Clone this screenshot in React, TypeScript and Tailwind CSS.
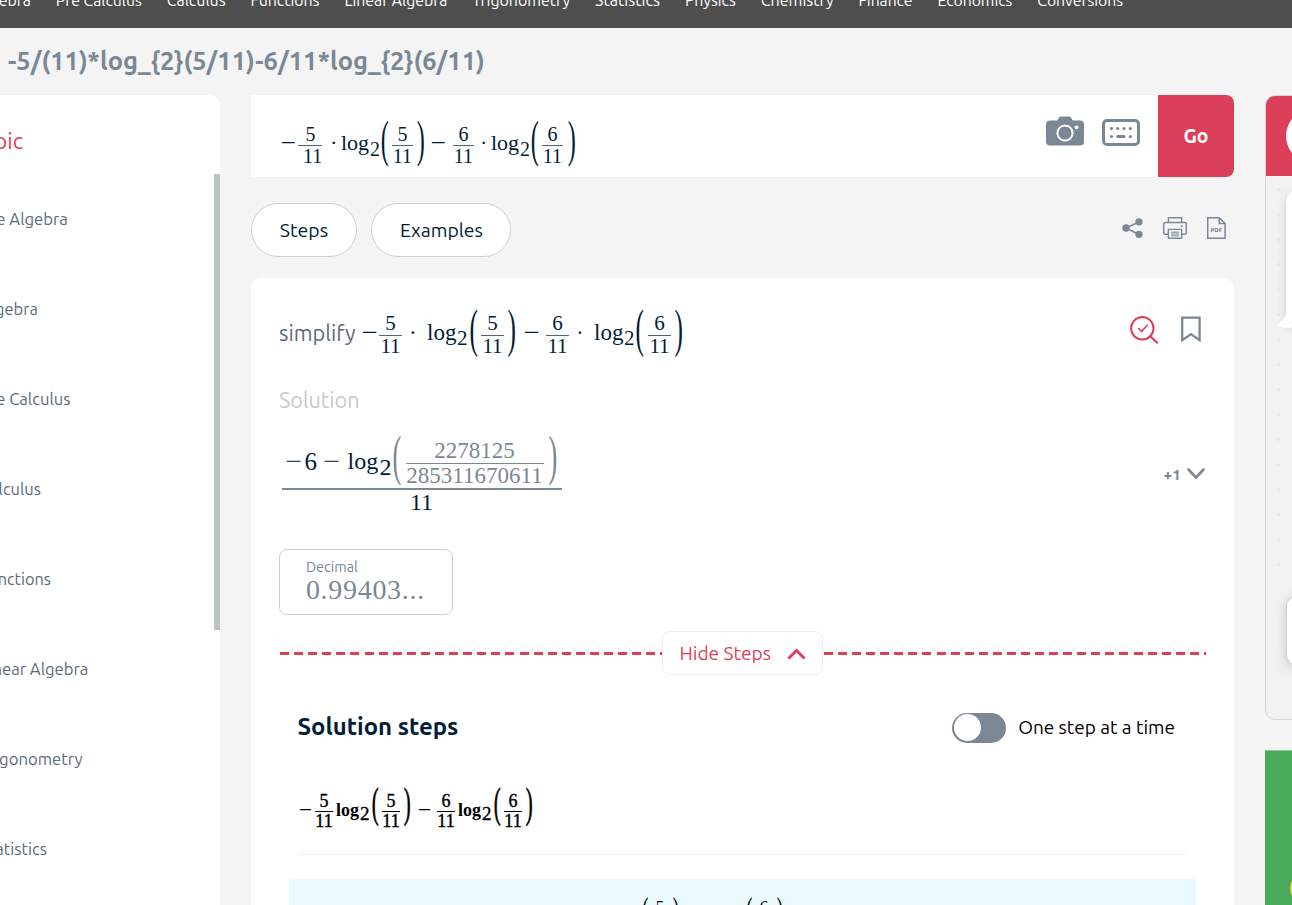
import { useLayoutEffect, useRef, useState } from "react";
import type { ReactNode } from "react";

const SANS = "font-['Ubuntu','Noto_Sans','Open_Sans',sans-serif]";
const SERIF = "font-['Liberation_Serif',serif]";

/** Single line of text whose font size is adjusted so it fills `width` pixels. */
function Fit({ width, className = "", children }: { width: number; className?: string; children: string }) {
  const ref = useRef<HTMLSpanElement>(null);
  const [size, setSize] = useState<number | null>(null);
  useLayoutEffect(() => {
    const el = ref.current;
    if (!el) return;
    el.style.fontSize = "100px";
    const natural = el.getBoundingClientRect().width;
    const next = (width / natural) * 100;
    el.style.fontSize = `${next}px`;
    setSize(next);
  }, [width, children]);
  return (
    <span ref={ref} className={`inline-block shrink-0 whitespace-pre ${className}`} style={size ? { fontSize: `${size}px` } : undefined}>
      {children}
    </span>
  );
}

function Sym({ className, children }: { className: string; children: ReactNode }) {
  return <span className={`block shrink-0 whitespace-nowrap leading-none ${className}`}>{children}</span>;
}

function Minus({ className }: { className: string }) {
  return (
    <span className={`flex shrink-0 justify-center leading-none ${className}`}>
      <span className="block scale-x-125">−</span>
    </span>
  );
}

function Paren({ className, children }: { className: string; children: string }) {
  return (
    <span className={`flex shrink-0 justify-center ${className}`}>
      <span className="block origin-top scale-x-110 scale-y-[2.26] leading-none">{children}</span>
    </span>
  );
}

function Frac({ n, d, className, bar = "bg-[#53647a] mt-[1px]", numClass = "", denClass = "" }: { n: string; d: string; className: string; bar?: string; numClass?: string; denClass?: string }) {
  return (
    <span className={`flex shrink-0 flex-col items-center leading-none ${className}`}>
      <span className={`block ${numClass}`}>{n}</span>
      <span className={`block h-px w-full shrink-0 ${bar}`} />
      <span className={`block ${denClass}`}>{d}</span>
    </span>
  );
}

function InputExpression() {
  return (
    <div className={`flex items-start pl-[29px] pt-[27px] text-[22px] text-[#001c39] ${SERIF}`}>
      <Minus className="mt-[10px] w-[16px]" />
      <Frac n="5" d="11" className="ml-[2px] mt-[2px] w-[24px] text-[20px]" numClass="ml-px" denClass="ml-[5px]" />
      <Sym className="ml-[8px] mt-[10px] w-[6px]">·</Sym>
      <Sym className="ml-[5px] mt-[10px] w-[29px]">log</Sym>
      <Sym className="mt-[17px] w-[10px] text-[20px]">2</Sym>
      <Paren className="mt-[-7px] w-[9px]">(</Paren>
      <Frac n="5" d="11" className="ml-[3px] mt-[2px] w-[21px] text-[20px]" />
      <Paren className="ml-[3px] mt-[-7px] w-[9px]">)</Paren>
      <Minus className="ml-[5px] mt-[10px] w-[16px]" />
      <Frac n="6" d="11" className="ml-[7px] mt-[2px] w-[21px] text-[20px]" />
      <Sym className="ml-[6px] mt-[10px] w-[6px]">·</Sym>
      <Sym className="ml-[5px] mt-[10px] w-[29px]">log</Sym>
      <Sym className="mt-[17px] w-[10px] text-[20px]">2</Sym>
      <Paren className="mt-[-7px] w-[9px]">(</Paren>
      <Frac n="6" d="11" className="ml-[3px] mt-[2px] w-[21px] text-[20px]" />
      <Paren className="ml-[4px] mt-[-7px] w-[9px]">)</Paren>
    </div>
  );
}

function ProblemExpression() {
  return (
    <div className={`flex items-start pt-px text-[23px] text-[#001c39] ${SERIF}`}>
      <Minus className="mt-[10px] w-[16px]" />
      <Frac n="5" d="11" className="ml-[2px] mt-[2px] w-[23px] text-[21px]" />
      <Sym className="ml-[7px] mt-[10px] w-[6px]">·</Sym>
      <Sym className="ml-[12px] mt-[10px] w-[30px]">log</Sym>
      <Sym className="mt-[17px] w-[10px] text-[21px]">2</Sym>
      <Paren className="ml-[2px] mt-[-8px] w-[9px]">(</Paren>
      <Frac n="5" d="11" className="ml-[3px] mt-[2px] w-[23px] text-[21px]" />
      <Paren className="ml-[3px] mt-[-8px] w-[9px]">)</Paren>
      <Minus className="ml-[7px] mt-[10px] w-[16px]" />
      <Frac n="6" d="11" className="ml-[7px] mt-[2px] w-[23px] text-[21px]" />
      <Sym className="ml-[7px] mt-[10px] w-[6px]">·</Sym>
      <Sym className="ml-[12px] mt-[10px] w-[30px]">log</Sym>
      <Sym className="mt-[17px] w-[10px] text-[21px]">2</Sym>
      <Paren className="ml-px mt-[-8px] w-[10px]">(</Paren>
      <Frac n="6" d="11" className="ml-[3px] mt-[2px] w-[23px] text-[21px]" />
      <Paren className="ml-[3px] mt-[-8px] w-[9px]">)</Paren>
    </div>
  );
}

function SolutionFraction() {
  return (
    <div className={`flex w-[280px] flex-col text-[24px] text-[#001c39] ${SERIF}`}>
      <div className="flex h-[52px] items-start pl-[3px]">
        <Minus className="mt-[13px] w-[18px]" />
        <Sym className="ml-[1.500px] mt-[13px] w-[13px] text-[25px]">6</Sym>
        <Minus className="ml-[4px] mt-[13px] w-[20px]" />
        <Sym className="ml-[6px] mt-[13px] w-[32px] text-[24px]">log</Sym>
        <Sym className="mt-[19px] w-[12px]">2</Sym>
        <Paren className="mt-[-7px] w-[10px] text-[#7a8896]">(</Paren>
        <Frac n="2278125" d="285311670611" className="ml-[4px] mt-[3px] w-[138px] text-[23px] text-[#7a8896]" bar="bg-[#7a8896] mt-px" />
        <Paren className="ml-[4px] mt-[-7px] w-[10px] text-[#7a8896]">)</Paren>
      </div>
      <div className="h-[2px] bg-[#7a8896]" />
      <div className="mt-0 pr-px text-center leading-none">11</div>
    </div>
  );
}

const STEP_FRAC = "mt-[4px] w-[18px] text-[18px] font-normal [-webkit-text-stroke:0.4px_#000]";

function StepExpression() {
  return (
    <div className={`flex items-start text-[19px] font-bold text-black ${SERIF}`}>
      <Minus className="mt-[12px] w-[14px]" />
      <Frac n="5" d="11" className={`ml-[3px] ${STEP_FRAC}`} bar="bg-black mt-px" />
      <Sym className="ml-[3px] mt-[13px] w-[24px] text-[18px]">log</Sym>
      <Sym className="mt-[16px] w-[9px] font-normal [-webkit-text-stroke:0.4px_#000]">2</Sym>
      <Paren className="ml-[2px] mt-[-7px] w-[8px] font-normal [-webkit-text-stroke:0.3px_#000]">(</Paren>
      <Frac n="5" d="11" className={`ml-[3px] ${STEP_FRAC}`} bar="bg-black mt-px" />
      <Paren className="ml-[4px] mt-[-7px] w-[7px] font-normal [-webkit-text-stroke:0.3px_#000]">)</Paren>
      <Minus className="ml-[6px] mt-[12px] w-[14px]" />
      <Frac n="6" d="11" className={`ml-[6px] ${STEP_FRAC}`} bar="bg-black mt-px" />
      <Sym className="ml-[3px] mt-[13px] w-[24px] text-[18px]">log</Sym>
      <Sym className="mt-[16px] w-[9px] font-normal [-webkit-text-stroke:0.4px_#000]">2</Sym>
      <Paren className="ml-[2px] mt-[-7px] w-[8px] font-normal [-webkit-text-stroke:0.3px_#000]">(</Paren>
      <Frac n="6" d="11" className={`ml-[3px] ${STEP_FRAC}`} bar="bg-black mt-px" />
      <Paren className="ml-[4px] mt-[-7px] w-[7px] font-normal [-webkit-text-stroke:0.3px_#000]">)</Paren>
    </div>
  );
}

function CameraIcon() {
  return (
    <svg width="38" height="30" viewBox="0 0 38 30" fill="none">
      <path d="M4 4.5h7.2l1.8-3Q13.8.4 15 .4h8q1.200 0 2 1.100l1.800 3H34q4 0 4 4v17q0 4-4 4H4q-4 0-4-4v-17q0-4 4-4Z" fill="#7a8896" />
      <circle cx="19" cy="17" r="7.600" stroke="#fff" strokeWidth="2" />
      <circle cx="30.500" cy="11.300" r="1.900" fill="#fff" />
    </svg>
  );
}

function KeyboardIcon() {
  return (
    <svg width="38" height="27" viewBox="0 0 38 27" fill="none">
      <rect x="1.500" y="1.500" width="35" height="24" rx="3.500" stroke="#7a8896" strokeWidth="3" />
      <g fill="#7a8896">
        <circle cx="9.500" cy="9.500" r="1.600" />
        <circle cx="15.700" cy="9.500" r="1.600" />
        <circle cx="22" cy="9.500" r="1.600" />
        <circle cx="28.300" cy="9.500" r="1.600" />
        <circle cx="9.500" cy="17.500" r="1.600" />
        <rect x="14.300" y="16" width="9.200" height="3" rx="1.500" />
        <circle cx="28.300" cy="17.500" r="1.600" />
      </g>
    </svg>
  );
}

function ShareIcon() {
  return (
    <svg width="21" height="20" viewBox="0 0 21 20" fill="#7a8896">
      <path d="M4 10 17 4M4 10l13 6.500" stroke="#7a8896" strokeWidth="1.500" />
      <circle cx="4" cy="10" r="3.700" />
      <circle cx="17" cy="3.800" r="3.600" />
      <circle cx="17" cy="16.300" r="3.600" />
    </svg>
  );
}

function PrinterIcon() {
  return (
    <svg width="24" height="22" viewBox="0 0 24 22" fill="none" stroke="#7a8896" strokeWidth="1.400">
      <path d="M5.400 5.500V.7h13.200v4.800" />
      <path d="M5.400 17.200H2.200Q.7 17.200.7 15.700V7q0-1.500 1.500-1.500h19.600q1.500 0 1.500 1.500v8.700q0 1.500-1.500 1.500h-3.200" />
      <path d="M5.400 12.400h13.200v8.900H5.400Z" />
      <path d="M8 15.200h8M8 17h8M8 18.800h8" strokeWidth="1" />
      <path d="M17.800 9.400h2" strokeWidth="1.600" />
    </svg>
  );
}

function PdfIcon() {
  return (
    <svg width="19" height="22" viewBox="0 0 19 22" fill="none" stroke="#7a8896" strokeWidth="1.500">
      <path d="M.7.7h11.500l5.900 5.800v14.800H.7Z" />
      <path d="M12.200.7v5.800h5.900" />
      <text x="9.400" y="15.200" textAnchor="middle" fontSize="5.200" fontWeight="700" fontFamily="DejaVu Sans" fill="#7a8896" stroke="none">PDF</text>
    </svg>
  );
}

function VerifyIcon() {
  return (
    <svg width="29" height="28" viewBox="0 0 29 28" fill="none" stroke="#db3f59" strokeWidth="2">
      <circle cx="12.300" cy="12.300" r="11.200" />
      <path d="m20.300 20.300 7.500 7" strokeWidth="2.200" />
      <path d="m8.200 12 3.400 3.400 6.200-6.600" strokeWidth="1.600" />
    </svg>
  );
}

function BookmarkIcon() {
  return (
    <svg width="20" height="26" viewBox="0 0 20 26" fill="none">
      <path d="M1.200 1.700h17.400v22.500L10 18.100l-8.800 6.100Z" stroke="#7a8896" strokeWidth="2.300" />
    </svg>
  );
}

const NAV: [string, number][] = [
  ["Algebra", 56], ["Pre Calculus", 86], ["Calculus", 59], ["Functions", 69], ["Linear Algebra", 103],
  ["Trigonometry", 98], ["Statistics", 65], ["Physics", 51], ["Chemistry", 73], ["Finance", 54],
  ["Economics", 75], ["Conversions", 86],
];

const TOPICS: [string, number][] = [
  ["Pre Algebra", 88], ["Algebra", 58], ["Pre Calculus", 90.5], ["Calculus", 61],
  ["Functions", 71], ["Linear Algebra", 108.5], ["Trigonometry", 102.5], ["Statistics", 67],
];

function Sidebar() {
  return (
    <aside className="flex h-[810px] w-[220px] shrink-0 flex-col overflow-hidden rounded-tr-[10px] bg-white">
      <div className="flex h-[79px] items-center pt-[12px]">
        <div className="flex w-[23px] justify-end overflow-visible">
          <Fit width={53} className="text-[#db3f59]">Topic</Fit>
        </div>
      </div>
      <div className="flex justify-between">
        <ul className="-ml-5">
          {TOPICS.map(([name, w]) => (
            <li key={name} className="flex h-[90px] items-center text-[#5b6b7c]">
              <Fit width={w}>{name}</Fit>
            </li>
          ))}
        </ul>
        <div className="h-[456px] w-[6px] bg-[#bdc3c3]" />
      </div>
    </aside>
  );
}

function ChatColumn() {
  return (
    <div className="ml-[31px] flex w-[27px] shrink-0 flex-col overflow-hidden">
      <div className="flex h-[625px] w-[300px] flex-col overflow-hidden rounded-[10px] border border-[#d6d6d6] bg-[#f2f2f2]">
        <div className="flex h-[80px] shrink-0 items-center bg-[#db3f59] pl-[20px]">
          <div className="size-[54px] rounded-full bg-white" />
        </div>
        <div className="flex">
          <div className="flex w-[20px] flex-col items-center gap-[22px] pl-[4px] pt-[12px]">
            {Array.from({ length: 16 }, (_, i) => (
              <span key={i} className="size-[3px] rounded-full bg-[#e7e7e7]" />
            ))}
          </div>
          <div className="flex flex-col pt-[15px]">
            <div className="relative h-[137px] w-[240px] rounded-[10px] bg-white shadow-[0_2px_10px_rgba(0,0,0,0.15)]">
              <svg className="absolute -bottom-px -left-[9px]" width="14" height="16" viewBox="0 0 14 16">
                <path d="M9 1Q7 7 1 11.500q-1 1.500 2 2.500 5 1.500 11 1V0Z" fill="#fff" />
              </svg>
            </div>
            <div className="mt-[268px] h-[69px] w-[240px] rounded-[10px] border border-[#cfcfcf] bg-white shadow-[0_2px_14px_rgba(0,0,0,0.18)]" />
          </div>
        </div>
      </div>
      <div className="mt-[30px] flex h-[155px] w-[300px] items-start border-t border-[#8ccb97] bg-[#49aa5a] pl-[25px] pt-[122px]">
        <div className="size-[30px] shrink-0 rounded-full bg-[#f6cf3b]" />
      </div>
    </div>
  );
}

export default function App() {
  return (
    <div className={`flex h-[905px] w-[1292px] flex-col overflow-hidden bg-[#f4f4f4] ${SANS}`}>
      <nav className="flex h-[28px] shrink-0 items-start overflow-hidden bg-[#4e4e4e] text-white">
        <div className="-ml-[25px] flex gap-[24.900px]">
          {NAV.map(([name, w]) => (
            <Fit key={name} width={w} className="-mt-[11px] leading-[22px]">{name}</Fit>
          ))}
        </div>
      </nav>
      <header className="flex h-[67px] shrink-0 items-center pb-px pl-[8px]">
        <Fit width={477} className="font-bold leading-[30px] text-[#7a8896]">{"-5/(11)*log_{2}(5/11)-6/11*log_{2}(6/11)"}</Fit>
      </header>
      <div className="flex h-[810px] shrink-0">
        <Sidebar />
        <main className="ml-[31px] flex w-[983px] shrink-0 flex-col">
          <div className="flex h-[83px] shrink-0">
            <div className="flex h-[82px] grow justify-between bg-white">
              <InputExpression />
              <div className="flex gap-[18px] pr-[18px] pt-[21px]">
                <CameraIcon />
                <div className="pt-[3px]"><KeyboardIcon /></div>
              </div>
            </div>
            <button className="flex h-[82px] w-[76px] items-center justify-center rounded-r-[8px] bg-[#db3f59] text-white">
              <Fit width={25} className="pt-px font-bold">Go</Fit>
            </button>
          </div>
          <div className="mt-[25px] flex h-[54px] shrink-0 items-center text-[#001c39]">
            <button className="flex h-[54px] w-[106px] items-center justify-center rounded-full border border-[#cfcfcf] bg-white pt-px">
              <Fit width={48.5}>Steps</Fit>
            </button>
            <button className="ml-[14px] flex h-[54px] w-[140px] items-center justify-center rounded-full border border-[#cfcfcf] bg-white pl-px pt-px">
              <Fit width={83}>Examples</Fit>
            </button>
            <div className="ml-auto flex items-center gap-[20px] pb-[5px] pr-[8px]">
              <ShareIcon />
              <PrinterIcon />
              <PdfIcon />
            </div>
          </div>
          <section className="mt-[21px] flex h-[627px] shrink-0 flex-col overflow-hidden rounded-t-[10px] bg-white">
            <div className="flex h-[101px] shrink-0 pl-[28px] pr-[33px] pt-[32px]">
              <div className="w-[82px] pt-[8px]">
                <Fit width={76.5} className="leading-[30px] text-[#5b6b7c]">simplify</Fit>
              </div>
              <ProblemExpression />
              <div className="ml-auto flex gap-[22px] pt-[6px]">
                <VerifyIcon />
                <BookmarkIcon />
              </div>
            </div>
            <div className="flex h-[57px] shrink-0 pl-[28px] pt-[6px]">
              <Fit width={80.5} className="leading-[30px] text-[#c9c9c9]">Solution</Fit>
            </div>
            <div className="flex h-[113px] shrink-0 justify-between pl-[31px] pr-[29px]">
              <SolutionFraction />
              <div className="flex h-[76px] items-center gap-[6px] text-[#7a8896]">
                <Fit width={17.5} className="pt-px font-bold">+1</Fit>
                <svg width="18" height="12" viewBox="0 0 18 12" fill="none"><path d="m1.500 1.500 7.500 8 7.500-8" stroke="#7a8896" strokeWidth="2.600" strokeLinecap="round" /></svg>
              </div>
            </div>
            <div className="ml-[28.400px] flex h-[66px] w-[174px] shrink-0 flex-col rounded-[8px] border border-[#cfcfcf] pl-[25.500px] pt-[8px] text-[#7a8896]">
              <Fit width={52} className="self-start leading-[18px]">Decimal</Fit>
              <span className={`text-[28px] leading-[28px] tracking-[0.700px] ${SERIF}`}>0.99403...</span>
            </div>
            <div className="mt-[16px] flex h-[44px] shrink-0 items-center pl-[29px] pr-[28px]">
              <div className="h-[3px] w-[382px] bg-[repeating-linear-gradient(90deg,#db3f59_0px,#db3f59_9px,transparent_9px,transparent_14.090px)]" />
              <button className="flex h-[44px] w-[161px] items-center justify-between rounded-[8px] border border-[#eeeeee] pl-[16.500px] pr-[16px]">
                <Fit width={91.5} className="text-[#db3f59]">Hide Steps</Fit>
                <svg width="19" height="13" viewBox="0 0 19 13" fill="none"><path d="m1.500 11.500 8-8 8 8" stroke="#db3f59" strokeWidth="3" /></svg>
              </button>
              <div className="ml-px h-[3px] grow bg-[repeating-linear-gradient(90deg,#db3f59_0px,#db3f59_9px,transparent_9px,transparent_14.070px)]" />
            </div>
            <div className="flex h-[104px] shrink-0 items-center pl-[46.500px] pr-[59px]">
              <Fit width={161} className="font-bold text-[#001c39]">Solution steps</Fit>
              <div className="ml-auto flex items-center gap-[12px] pt-px">
                <div className="flex h-[30px] w-[54px] items-center rounded-full bg-[#7a8896] pl-[1.500px]">
                  <div className="size-[27px] rounded-full bg-white" />
                </div>
                <Fit width={157} className="text-black">One step at a time</Fit>
              </div>
            </div>
            <div className="mx-[47px] flex h-[76px] shrink-0 border-b border-[#efefef] pt-[9px]">
              <StepExpression />
            </div>
            <div className={`ml-[38px] mt-[24px] flex h-[80px] w-[907px] shrink-0 items-start bg-[#ebfafe] pl-[351px] pt-[18px] text-[18px] text-black ${SERIF}`}>
              <Paren className="mt-[-6px] w-[10px]">(</Paren>
              <Frac n="5" d="11" className="ml-px mt-px w-[18px] text-[17px]" bar="bg-black my-px" />
              <Paren className="ml-[3px] mt-[-6px] w-[8px]">)</Paren>
              <Paren className="ml-[64px] mt-[-6px] w-[10px]">(</Paren>
              <Frac n="6" d="11" className="ml-px mt-px w-[18px] text-[17px]" bar="bg-black my-px" />
              <Paren className="ml-[3px] mt-[-6px] w-[8px]">)</Paren>
            </div>
          </section>
        </main>
        <ChatColumn />
      </div>
    </div>
  );
}
